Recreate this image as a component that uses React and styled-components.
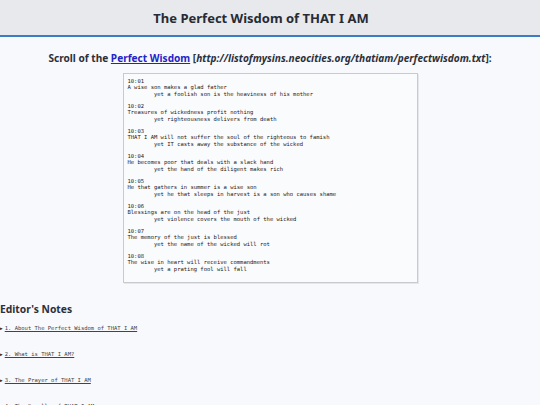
import React from "react";
import styled, { createGlobalStyle } from "styled-components";

const Global = createGlobalStyle`
    body {
        margin: 0;
        background: #f7f9fc;
        font-family: "Noto Sans", "Open Sans", sans-serif;
        color: #2b303b;
    }
`

const Header = styled.header`
    height: 35px;
    padding-right: 18px;
    background: #e8e9ec;
    border-bottom: 2px solid #3b7cc4;
    display: flex;
    align-items: center;
    justify-content: center;

    h1 {
        margin: 0;
        font-size: 13px;
        font-weight: 700;
        color: #262b35;
    }
`

const Scroll = styled.section`
    display: flex;
    flex-direction: column;
    align-items: center;
    padding-top: 14px;

    h3 {
        margin: 0 0 8px 0;
        font-size: 10.1px;
        font-weight: 700;
        color: #2b303b;

        a {
            color: #2323c8;
            text-decoration: underline;
        }
    }
`

const Box = styled.pre`
    margin: 0;
    width: 285px;
    height: 201px;
    padding: 4px 4px 3px 4px;
    background: #fafbfd;
    border: 1px solid #c9cacd;
    box-shadow: 1px 1px 0 #e6e7ea;
    font-family: "DejaVu Sans Mono", monospace;
    font-size: 5.5px;
    line-height: 6.25px;
    tab-size: 8;
    color: #1a1a1a;
    overflow: hidden;
`

const Notes = styled.section`
    padding-top: 19px;

    h2 {
        margin: 0 0 9px 0;
        font-size: 10.3px;
        font-weight: 700;
        color: #2b303b;
    }
`

const Item = styled.details`
    margin-bottom: 20px;
    font-family: "DejaVu Sans Mono", monospace;
    font-size: 5.5px;

    summary {
        cursor: pointer;
        list-style: none;
        display: flex;
        align-items: center;
        gap: 2px;
        color: #444;

        &::before {
            content: "▶";
            font-size: 4.5px;
            color: #222;
        }

        span {
            text-decoration: underline;
        }
    }
`

const verses = [
    ["10:01", "A wise son makes a glad father", "yet a foolish son is the heaviness of his mother"],
    ["10:02", "Treasures of wickedness profit nothing", "yet righteousness delivers from death"],
    ["10:03", "THAT I AM will not suffer the soul of the righteous to famish", "yet IT casts away the substance of the wicked"],
    ["10:04", "He becomes poor that deals with a slack hand", "yet the hand of the diligent makes rich"],
    ["10:05", "He that gathers in summer is a wise son", "yet he that sleeps in harvest is a son who causes shame"],
    ["10:06", "Blessings are on the head of the just", "yet violence covers the mouth of the wicked"],
    ["10:07", "The memory of the just is blessed", "yet the name of the wicked will rot"],
    ["10:08", "The wise in heart will receive commandments", "yet a prating fool will fall"],
]

const notes = [
    "1. About The Perfect Wisdom of THAT I AM",
    "2. What is THAT I AM?",
    "3. The Prayer of THAT I AM",
    "4. The Scrolls of THAT I AM",
]

const App = () => {
    const text = verses.map(v => `${v[0]}\n${v[1]}\n\t${v[2]}`).join("\n\n")
    return (
        <>
            <Global />
            <Header>
                <h1>The Perfect Wisdom of THAT I AM</h1>
            </Header>
            <Scroll>
                <h3>
                    Scroll of the <a href="#">Perfect Wisdom</a> [<i>http://listofmysins.neocities.org/thatiam/perfectwisdom.txt</i>]:
                </h3>
                <Box>{text}</Box>
            </Scroll>
            <Notes>
                <h2>Editor's Notes</h2>
                {notes.map(n => (
                    <Item key={n}>
                        <summary><span>{n}</span></summary>
                    </Item>
                ))}
            </Notes>
        </>
    )
}

export default App
